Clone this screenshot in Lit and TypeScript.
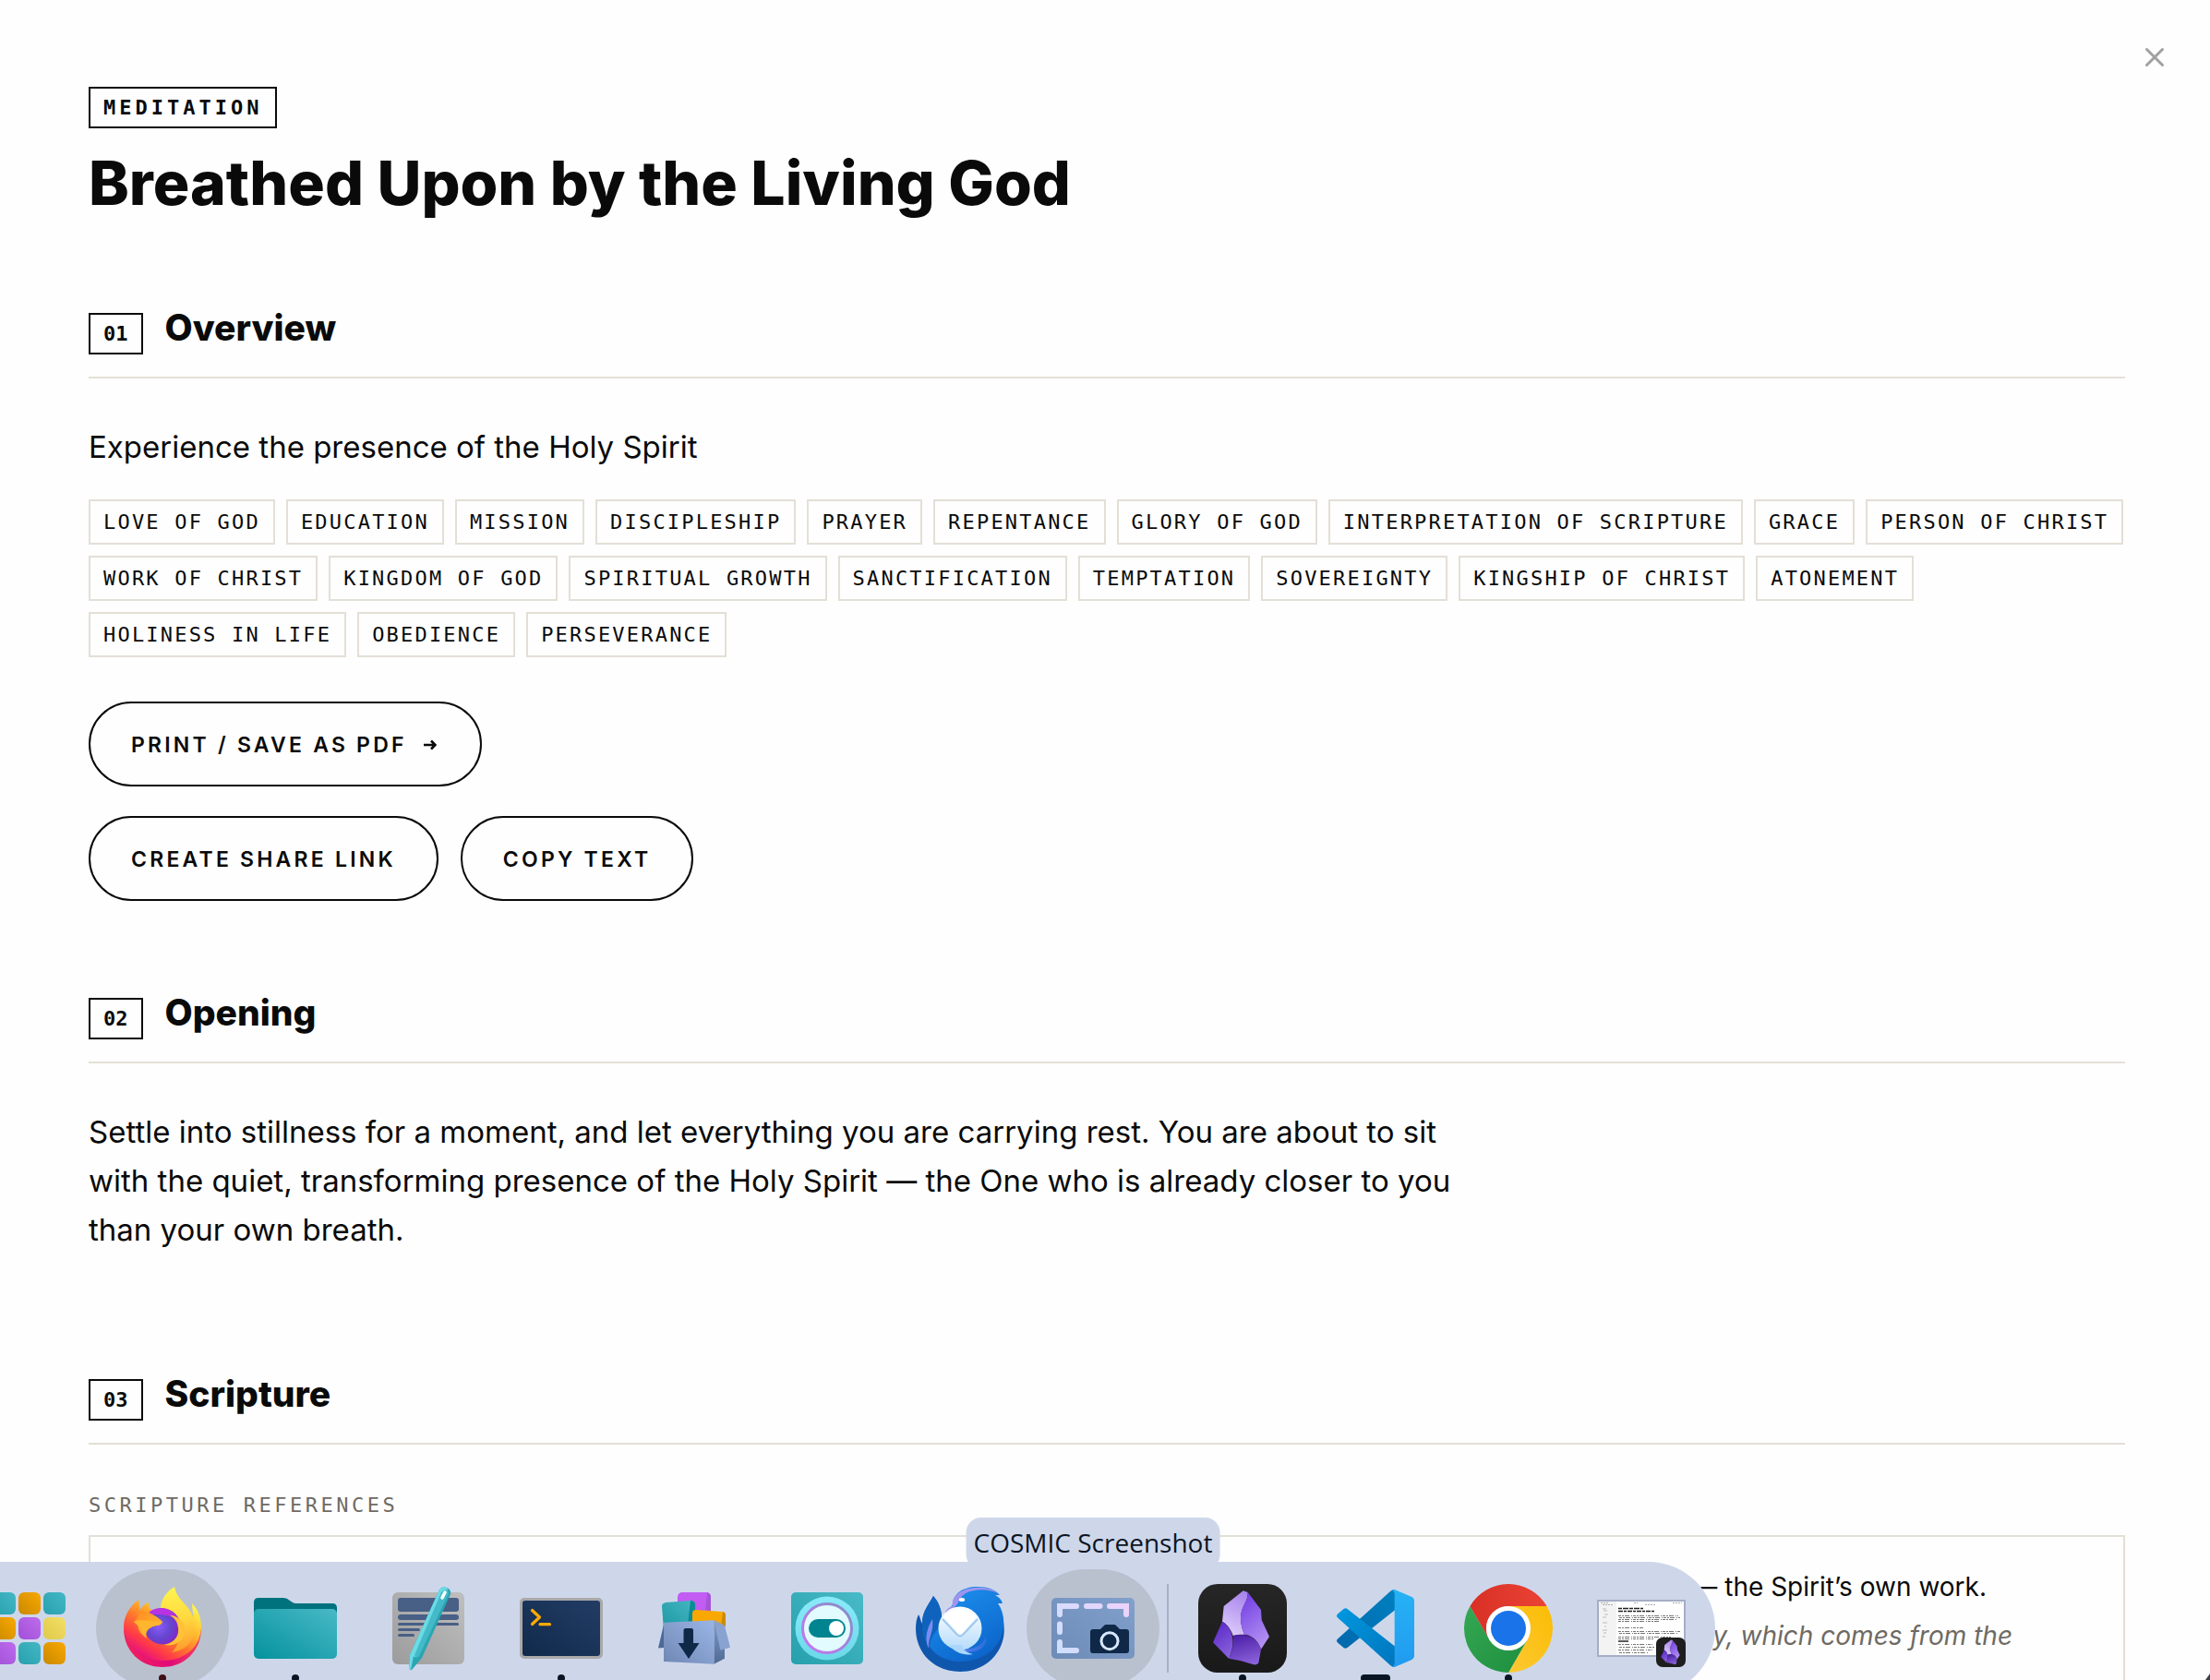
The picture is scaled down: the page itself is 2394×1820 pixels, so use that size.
import { LitElement, html, css, svg, nothing } from "lit";
import type { TemplateResult } from "lit";
import { customElement, property } from "lit/decorators.js";
import { classMap } from "lit/directives/class-map.js";

const TAGS = [
  "Love of God", "Education", "Mission", "Discipleship", "Prayer", "Repentance",
  "Glory of God", "Interpretation of Scripture", "Grace", "Person of Christ",
  "Work of Christ", "Kingdom of God", "Spiritual Growth", "Sanctification",
  "Temptation", "Sovereignty", "Kingship of Christ", "Atonement",
  "Holiness in Life", "Obedience", "Perseverance",
];

const crystal = svg`
  <path d="M48.700 7.300 53.700 9C54 20 46 24 46 37C46 44 48 50 50 54.700C46 54.500 42 54.800 37.700 56C36 50 31 43 26 40.700L27.700 24Z" fill="url(#ob-a)"/>
  <path d="M53.700 9 68 28 68.700 39 77 57 68 70.700C65 62 58 55 50 54.700C48 50 46 44 46 37C46 24 54 20 53.700 9Z" fill="url(#ob-b)"/>
  <path d="M26 40.700C36 46 42 62 33 80.700L16 63.300Z" fill="url(#ob-c)"/>
  <path d="M37.700 56C50 53 63 56 68 70.700L65.300 85.700Q63 88 60 87.300L45.300 83 33 80.700C37 74 38.500 64 37.700 56Z" fill="url(#ob-d)"/>`;

const crystalDefs = svg`<defs>
  <linearGradient id="ob-a" x1=".7" y1="0" x2=".4" y2="1"><stop stop-color="#a884ee"/><stop offset="1" stop-color="#dccbfa"/></linearGradient>
  <linearGradient id="ob-b" x1=".3" y1="0" x2=".7" y2="1"><stop stop-color="#7441e4"/><stop offset="1" stop-color="#b594f2"/></linearGradient>
  <linearGradient id="ob-c" x1=".3" y1="0" x2=".7" y2="1"><stop stop-color="#5a28c6"/><stop offset="1" stop-color="#8a63dd"/></linearGradient>
  <linearGradient id="ob-d" x1=".3" y1="0" x2=".6" y2="1"><stop stop-color="#4c1fa6"/><stop offset="1" stop-color="#8b62dc"/></linearGradient>
  <linearGradient id="ob-bg" x1="0" y1="0" x2="0" y2="1"><stop stop-color="#262626"/><stop offset="1" stop-color="#191919"/></linearGradient>
</defs>`;

const tile = (x: number, y: number, fill: string) =>
  svg`<rect x=${x} y=${y} width="24" height="24" rx="6" fill=${`url(#ap-${fill})`}/>`;

const ICONS: Record<string, TemplateResult> = {
  apps: svg`<defs>
      <linearGradient id="ap-t" x1="0" y1="1" x2="1" y2="0"><stop stop-color="#27a0ad"/><stop offset="1" stop-color="#45b7c5"/></linearGradient>
      <linearGradient id="ap-o" x1="0" y1="1" x2="1" y2="0"><stop stop-color="#c98900"/><stop offset="1" stop-color="#f9a800"/></linearGradient>
      <linearGradient id="ap-p" x1="0" y1="1" x2="1" y2="0"><stop stop-color="#a150d8"/><stop offset="1" stop-color="#bd6cec"/></linearGradient>
      <linearGradient id="ap-y" x1="0" y1="1" x2="1" y2="0"><stop stop-color="#dfc94a"/><stop offset="1" stop-color="#f3df66"/></linearGradient>
    </defs>
    ${tile(9, 9, "t")}${tile(36, 9, "o")}${tile(63, 9, "t")}
    ${tile(9, 36, "o")}${tile(36, 36, "p")}${tile(63, 36, "y")}
    ${tile(9, 63, "p")}${tile(36, 63, "t")}${tile(63, 63, "o")}`,

  firefox: svg`<defs>
      <linearGradient id="ff-a" x1=".85" y1=".1" x2=".2" y2=".9"><stop stop-color="#fff04a"/><stop offset=".3" stop-color="#ffbd2e"/><stop offset=".55" stop-color="#ff7a2c"/><stop offset=".8" stop-color="#ff3a47"/><stop offset="1" stop-color="#e6127c"/></linearGradient>
      <linearGradient id="ff-b" x1=".5" y1="0" x2=".6" y2="1"><stop stop-color="#fff44f"/><stop offset=".5" stop-color="#ffd83f"/><stop offset="1" stop-color="#ff9a2c"/></linearGradient>
      <radialGradient id="ff-c" cx=".4" cy=".5" r=".65"><stop stop-color="#8a5bf8"/><stop offset=".5" stop-color="#6447cf"/><stop offset="1" stop-color="#8b1fc4"/></radialGradient>
      <linearGradient id="ff-d" x1="0" y1="0" x2="1" y2="1"><stop stop-color="#ff8a1f"/><stop offset="1" stop-color="#ffbf36"/></linearGradient>
      <linearGradient id="ff-e" x1="0" y1="0" x2="1" y2="0"><stop stop-color="#f0225c"/><stop offset=".6" stop-color="#e20a78"/><stop offset="1" stop-color="#f5425c"/></linearGradient>
    </defs>
    <path d="M6 48C6 73 25 90 48 90C71 90 90 73 90 48L80 62C70 80 30 86 6 48Z" fill="url(#ff-e)"/>
    <path d="M22 17C23 21 23 25 24 28C26 24 29 21 33 20C33 24 34 27 37 29L50 26C62 26 72 30 82 36C81 31 80 26 80 21C87 28 90 37 90 47C89 70 71 83 48 83C27 83 9 70 6 47C6 34 13 24 22 17Z" fill="url(#ff-a)"/>
    <path d="M46 27C46 16 53 8 61 3C63 13 69 18 75 25C84 36 86 48 80 60C75 69 66 73 58 74C68 66 70 44 60 34Z" fill="url(#ff-b)"/>
    <circle cx="48" cy="46" r="19.500" fill="url(#ff-c)"/>
    <path d="M34 30C42 24 55 24 62 34C65 36 67 38 66 40C60 33 45 33 34 33Z" fill="#b833e1"/>
    <path d="M56 34C64 34 74 41 72 53C70 63 60 68 50 66C60 64 66 57 65 48C64 40 61 37 56 34Z" fill="#ffc136"/>
    <path d="M24 29C31 29 43 35 48 41C47 45 42 45 37 46C31 48 29 54 31 59C25 54 20 50 22 44C20 44 18 42 17 41C21 38 22 34 24 29Z" fill="url(#ff-d)"/>
    <path d="M17 41C24 37 36 41 48 41C46 46 40 44 36 47C31 49 29 54 30 58C25 54 25 47 17 41Z" fill="#ffb52e"/>`,

  folder: svg`<defs><linearGradient id="fo" x1="0" y1="1" x2="1" y2="0"><stop stop-color="#04929d"/><stop offset="1" stop-color="#49b9c7"/></linearGradient></defs>
    <path d="M3 45V20Q3 15 8 15H35Q39 15 42 18L45 20Q46 21 49 21H88Q93 21 93 26V45Z" fill="#00727d"/>
    <rect x="3" y="27" width="90" height="54" rx="5" fill="url(#fo)"/>`,

  editor: svg`<defs><linearGradient id="ed" x1="0" y1="1" x2="1" y2="0"><stop stop-color="#9c9c9c"/><stop offset="1" stop-color="#bfbfbf"/></linearGradient></defs>
    <rect x="9" y="9" width="78" height="78" rx="6" fill="url(#ed)"/>
    <g fill="#485f86"><rect x="15" y="15" width="66" height="15" rx="3"/><rect x="15" y="33" width="66" height="6" rx="3"/><rect x="15" y="42" width="66" height="3" rx="1.500"/><rect x="15" y="48" width="24" height="3" rx="1.500"/><rect x="15" y="54" width="18" height="3" rx="1.500"/></g>
    <path d="M60 6Q63 2 68 4Q73 6 72 11L41 80 30 93Q28 94 27 91L28 77Z" fill="#2aa5b3"/>
    <path d="M60 6Q63 2 68 4L69 6 36 79Q33 80 32 78L29 93Q27 93 27 91L28 77Z" fill="#6bdbe6"/>
    <path d="M62 9Q65 5 69 7L70 10 38 78Q35 81 33 77Z" fill="#44bac8"/>
    <path d="M66 9 63 15" stroke="#fff" stroke-width="3.500" stroke-linecap="round"/>`,

  terminal: svg`<defs><linearGradient id="te" x1="0" y1="1" x2="1" y2="0"><stop stop-color="#102a4b"/><stop offset="1" stop-color="#233c65"/></linearGradient></defs>
    <rect x="3" y="15" width="90" height="66" rx="5" fill="#a9a9a9"/><rect x="6" y="18" width="84" height="60" rx="3" fill="url(#te)"/>
    <path d="M16.500 28.500 24.500 36 16.500 43.500M25 43.700H35.500" fill="none" stroke="#ffab00" stroke-width="3.200" stroke-linecap="round" stroke-linejoin="round"/>`,

  shop: svg`<defs>
      <linearGradient id="sh" x1="0" y1="1" x2="1" y2="0"><stop stop-color="#7087b4"/><stop offset="1" stop-color="#9ab6e6"/></linearGradient>
      <linearGradient id="sh-s" x1="0" y1="0" x2="0" y2="1"><stop stop-color="#7f9bcb"/><stop offset="1" stop-color="#4f6b94"/></linearGradient>
      <linearGradient id="sh-t" x1="0" y1="1" x2="1" y2="0"><stop stop-color="#1b98a3"/><stop offset="1" stop-color="#45b7c2"/></linearGradient>
    </defs>
    <rect x="30" y="9" width="36" height="40" rx="5" fill="#c25cf3"/><path d="M62 9Q66 10 66 14V40H59Z" fill="#a654d8"/>
    <path d="M13 24Q13 21 17 20L44 18Q49 18 49 23V50H15Z" fill="url(#sh-t)"/><path d="M44 18Q49 18 49 23V44H41Z" fill="#0a8b97"/>
    <path d="M46 32Q46 28 50 28L78 30Q82 30 82 34L81 50H46Z" fill="#f9a800"/><path d="M79 30Q82 31 82 34V46H77Z" fill="#cb8b00"/>
    <path d="M15 44 9 69.500 15 69Z" fill="#4c6a96"/>
    <path d="M69.400 39.300 81 45V80.700L69.400 86.700Z" fill="url(#sh-s)"/>
    <path d="M15 41.700 69.400 39.300V86.700L15 84Z" fill="url(#sh)"/>
    <path d="M69.400 39.300 81 45 87 68.700 76.400 71.700Z" fill="#89a3d1"/>
    <path d="M36.500 50Q36.500 48 38.500 48H45Q47 48 47 50V64H53.500L42 81 30.600 64H36.500Z" fill="#0f2848"/>`,

  toggle: svg`<defs>
      <linearGradient id="to" x1="0" y1="1" x2="1" y2="0"><stop stop-color="#25a0ac"/><stop offset="1" stop-color="#4abac7"/></linearGradient>
      <linearGradient id="to-r" x1="0" y1="1" x2="1" y2="0"><stop stop-color="#c973f6"/><stop offset="1" stop-color="#8291c2"/></linearGradient>
      <linearGradient id="to-o" x1="0" y1="0" x2="0" y2="1"><stop stop-color="#8aeafa"/><stop offset="1" stop-color="#6bd9e8"/></linearGradient>
    </defs>
    <rect x="9" y="9" width="78" height="78" rx="5" fill="url(#to)"/><circle cx="48" cy="48" r="34.500" fill="url(#to-o)"/>
    <circle cx="48" cy="48" r="26.500" fill="#e2fbff" stroke="url(#to-r)" stroke-width="3"/>
    <rect x="28" y="38" width="40" height="20" rx="10" fill="#00848f"/><circle cx="58" cy="48" r="8" fill="#fff"/>`,

  thunderbird: svg`<defs>
      <linearGradient id="tb" x1=".2" y1="0" x2=".8" y2="1"><stop stop-color="#1e93f0"/><stop offset="1" stop-color="#0b62c9"/></linearGradient>
      <linearGradient id="tb-w" x1="0" y1="0" x2="0" y2="1"><stop stop-color="#fff"/><stop offset="1" stop-color="#b5dcfb"/></linearGradient>
      <linearGradient id="tb-v" x1="0" y1="0" x2="1" y2="0"><stop stop-color="#5f7ff0"/><stop offset="1" stop-color="#2b70dc"/></linearGradient>
    </defs>
    <path d="M3 33C5 36 5 40 7 43C7 30 13 24 19 13C27 22 30 34 27 48L32 74 92 30C96 40 97 52 94 62C88 82 70 95 48 95C21 95 0 76 0 48C0 42 1 37 3 33Z" fill="#0f56ad"/>
    <path d="M40 22C40 10 53 2 68 3C78 3 86 6 91 12L86 12C90 14 93 17 94 21L89 21C94 28 96 37 95 46C93 70 72 84 48 84C24 84 9 68 7 46C11 54 14 56 14 60C18 46 22 40 33 32Z" fill="url(#tb)"/>
    <path d="M40 24C38 13 50 4 66 4C76 3 85 6 91 11C80 5 64 5 54 10C46 15 48 20 42 25C38 28 33 30 32 36C30 30 35 25 40 24Z" fill="#9d94ee"/>
    <path d="M7 42C7 30 13 24 19 13C27 22 30 34 27 46C20 52 16 58 15 68C9 60 7 50 7 42Z" fill="#0f63bd"/>
    <path d="M18 38C12 48 9 60 14 70C13 58 20 52 18 38Z" fill="#7b8cf0"/>
    <path d="M46 68C58 74 72 68 76 57C79 66 68 76 54 73Z" fill="url(#tb-v)"/>
    <circle cx="48" cy="48" r="23.500" fill="url(#tb-w)"/>
    <path d="M36 66C42 74 52 78 62 76C54 74 50 70 50 66Z" fill="#a9d6fa"/>
    <path d="M29 38 44 54Q48 59 52 54L67 38" fill="none" stroke="#9fc8ee" stroke-width="2"/>
    <path d="M30 36C36 26 60 26 66 36L51 53Q48 56 45 53Z" fill="#fff"/>
    <ellipse cx="50" cy="17" rx="3.200" ry="2" fill="#fff"/>`,

  capture: svg`<defs>
      <linearGradient id="ca" x1="0" y1="1" x2="1" y2="0"><stop stop-color="#6d8bb7"/><stop offset="1" stop-color="#82a0cc"/></linearGradient>
      <linearGradient id="ca-l" gradientUnits="userSpaceOnUse" x1="9" y1="72" x2="87" y2="24"><stop stop-color="#cfdffe"/><stop offset="1" stop-color="#ecd2fb"/></linearGradient>
    </defs>
    <rect x="3" y="15" width="90" height="66" rx="5" fill="url(#ca)"/>
    <path d="M12 33V24H30M41 24H55.500M66 24H84V33M12 43.500V52M12 63V72H30" fill="none" stroke="url(#ca-l)" stroke-width="6" stroke-linecap="round"/>
    <path d="M48 49H56L60 45Q61 44 62 44H71Q72 44 73 45L77 49H84Q87 49 87 52V72Q87 75 84 75H48Q45 75 45 72V52Q45 49 48 49Z" fill="#0f2848"/>
    <circle cx="66" cy="61.700" r="9" fill="none" stroke="#d8e8ff" stroke-width="3"/>`,

  obsidian: svg`${crystalDefs}<rect width="96" height="96" rx="21" fill="url(#ob-bg)"/>${crystal}`,

  code: svg`<defs>
      <linearGradient id="vs-a" x1="1" y1="0" x2="0" y2="1"><stop stop-color="#0080c0"/><stop offset="1" stop-color="#0068ac"/></linearGradient>
      <linearGradient id="vs-b" x1="0" y1="0" x2="1" y2="1"><stop stop-color="#0098df"/><stop offset="1" stop-color="#0075bd"/></linearGradient>
      <linearGradient id="vs-c" x1="0" y1="0" x2="0" y2="1"><stop stop-color="#27b2f5"/><stop offset="1" stop-color="#219bef"/></linearGradient>
    </defs>
    <path d="M69 6V28.300L17.500 69Q15.500 70.500 13.500 69L7 63.500Q5 61.500 7 59.500L64 8Q66 6 69 6Z" fill="url(#vs-a)"/>
    <path d="M69 90V67.500L17.500 27Q15.500 25.500 13.500 27L7 32.500Q5 34.500 7 36.500L64 88Q66 90 69 90Z" fill="url(#vs-b)"/>
    <path d="M65.500 89.500Q68.700 88.500 68.700 85V11Q68.700 7.500 65.500 6.500Q68 5.500 71 7L87.500 14Q90 15.500 90 18V78Q90 80.500 87.500 82L71 89Q68 90.500 65.500 89.500Z" fill="url(#vs-c)"/>`,

  chrome: svg`<defs>
      <linearGradient id="ch-r" x1="0" y1="0" x2="1" y2="0"><stop stop-color="#d93025"/><stop offset="1" stop-color="#ea4335"/></linearGradient>
      <linearGradient id="ch-g" x1="1" y1="1" x2="0" y2="0"><stop stop-color="#1e8e3e"/><stop offset="1" stop-color="#34a853"/></linearGradient>
      <linearGradient id="ch-y" x1="0" y1="1" x2="1" y2="0"><stop stop-color="#fcc934"/><stop offset="1" stop-color="#fbbc04"/></linearGradient>
    </defs>
    <path d="M48 24H89.570A48 48 0 0 1 48 96L68.780 60Z" fill="url(#ch-y)"/>
    <path d="M6.430 24 27.220 60A24 24 0 0 0 68.780 60L48 96A48 48 0 0 1 6.430 24Z" fill="url(#ch-g)"/>
    <path d="M6.430 24A48 48 0 0 1 89.570 24H48A24 24 0 0 0 27.220 60Z" fill="url(#ch-r)"/>
    <circle cx="48" cy="48" r="24" fill="#fff"/><circle cx="48" cy="48" r="19" fill="#1a73e8"/>`,

  note: svg`${crystalDefs}
    <rect x="1" y="18" width="94" height="60" fill="#fff" stroke="#a5aec6" stroke-width="2"/>
    <rect x="2" y="19" width="19" height="58" fill="#f3f3f3"/>
    <g fill="none" stroke="#777" stroke-width="1">
      <path d="M23 26.500H50" stroke-width="1.500" stroke-dasharray="4 1 6 1" stroke="#222"/>
      <path d="M23 29.500H62" stroke-width="1.500" stroke-dasharray="5 1 3 1" stroke="#222"/>
      <path d="M4 20.500H12M40 20.500H44M82 20.500H92M6 22.500H18M52 22.500H64" stroke="#aaa" stroke-dasharray="2 1"/>
      <path d="M23 34.500H88M24 36.500H90M23 38.500H86M23 40.500H68M23 47.500H50M23 51.500H90M24 53.500H88M23 57.500H80M23 59.500H62M23 65.500H60M24 68.500H62M23 71.500H60M24 74.500H56" stroke-dasharray="3 1 2 1 5 2 1 1"/>
      <path d="M23 62H34" stroke="#222" stroke-width="1.500"/>
      <path d="M6 27H10M7 29H11M8 33H12M6 36H10M6 42H11M8 46H10M6 50H11M7 53H10M6 57H9" stroke="#bbb"/>
    </g>
    <svg x="64" y="58" width="32" height="32" viewBox="0 0 96 96"><rect width="96" height="96" rx="21" fill="#1e1e1e"/>${crystal}</svg>`,
};

@customElement("dock-item")
class DockItem extends LitElement {
  @property() icon = "";
  @property() label = "";
  @property() mark = "";
  @property() tip = "";
  @property({ type: Boolean }) lit = false;

  static styles = css`
    :host { display: block; flex: none; }
    .cell {
      position: relative; display: flex; flex-direction: column; align-items: center; gap: 2px;
      width: 144px; height: 128px; padding: 16px 0 0; border: 0; border-radius: 64px; background: none;
    }
    .lit { background: #b9c1cf; }
    .icon { display: block; flex: none; width: 96px; height: 96px; }
    .mark { flex: none; width: 8px; height: 8px; border-radius: 4px; background: #0a1523; }
    .red { background: #400e16; }
    .wide { width: 32px; }
    .tip {
      position: absolute; bottom: 100%; left: 50%; transform: translateX(-50%);
      padding: 7px 8px 9px; border-radius: 16px; background: #ced7ea; color: #0b1524;
      font: 28px/40px "Open Sans", sans-serif; white-space: nowrap;
    }
  `;

  render() {
    return html`<button class=${classMap({ cell: true, lit: this.lit })} aria-label=${this.label}>
      ${this.tip ? html`<span class="tip">${this.tip}</span>` : nothing}
      <svg class="icon" viewBox="0 0 96 96" aria-hidden="true">${ICONS[this.icon]}</svg>
      ${this.mark
        ? html`<span class=${classMap({ mark: true, wide: this.mark === "wide", red: this.mark === "red" })}></span>`
        : nothing}
    </button>`;
  }
}

@customElement("app-root")
export class AppRoot extends LitElement {
  static styles = css`
    :host {
      display: block; position: relative; height: 100vh; overflow: hidden;
      background: #fefefe; color: #0a0a0a; font-family: Inter, sans-serif;
    }
    * { box-sizing: border-box; }
    h1, h2, h3, p, ul { margin: 0; padding: 0; }
    .page { padding: 94px 92px 0 96px; }
    .close {
      position: absolute; top: 38px; right: 36px; display: grid; place-items: center;
      width: 48px; height: 48px; padding: 0; border: 0; background: none;
    }
    .badge, .number, .tag, .label {
      font-family: "DejaVu Sans Mono", "Liberation Mono", monospace; font-size: 22px; line-height: 25px;
    }
    .badge, .number { padding: 8px 14px; border: 2px solid #0a0a0a; font-weight: 700; }
    .badge { display: inline-block; letter-spacing: 4px; vertical-align: top; }
    h1 { margin-top: 23px; font-size: 66px; line-height: 72px; font-weight: 800; }
    section { display: flex; flex-direction: column; margin-top: 97px; }
    .head {
      display: flex; align-items: baseline; gap: 24px;
      padding-bottom: 24px; border-bottom: 2px solid #e4dfd6;
    }
    h2 { font-size: 39px; line-height: 48px; font-weight: 800; }
    .prose {
      max-width: 1500px; padding: 48px 0 30px;
      font-size: 33px; line-height: 53px;
    }
    .tags { display: flex; flex-wrap: wrap; gap: 12px; list-style: none; }
    .tag {
      padding: 10px 14px; border: 2px solid #e4dfd6;
      letter-spacing: 0.1em; text-transform: uppercase;
    }
    .actions { display: flex; flex-direction: column; gap: 32px; margin-top: 48px; }
    .row { display: flex; gap: 24px; }
    .pill {
      display: flex; align-items: center; gap: 18px; padding: 31px 44px 29px;
      border: 2px solid #0a0a0a; border-radius: 46px; background: none; color: inherit;
      font: 600 23px/28px Inter, sans-serif; letter-spacing: 0.14em; text-transform: uppercase;
    }
    .pill svg { margin-right: 3px; }
    .label {
      margin: 53px 0 20px; color: #6f6a62; font-weight: 400;
      letter-spacing: 0.16em; text-transform: uppercase;
    }
    .card {
      min-height: 240px; padding: 28px 120px 28px 28px; border: 2px solid #e4dfd6;
      font-size: 28px; line-height: 53px; text-align: right;
    }
    .claim { padding-right: 28px; }
    .quote { color: #6f6a62; font-style: italic; }
    .dock {
      position: absolute; bottom: -16px; left: -48px; display: flex; padding: 8px;
      border-radius: 0 72px 72px 0; background: #ced7ea;
    }
    .divider { width: 2px; height: 96px; margin: 16px 8px; background: #a6b0c6; }
    .corner { position: absolute; right: 0; bottom: 0; }
  `;

  private head(number: string, title: string) {
    return html`<header class="head"><span class="number">${number}</span><h2>${title}</h2></header>`;
  }

  render() {
    return html`
      <main class="page">
        <span class="badge">MEDITATION</span>
        <h1>Breathed Upon by the Living God</h1>

        <section>
          ${this.head("01", "Overview")}
          <p class="prose">Experience the presence of the Holy Spirit</p>
          <ul class="tags">${TAGS.map((t) => html`<li class="tag">${t}</li>`)}</ul>
          <div class="actions">
            <div class="row">
              <button class="pill">Print / Save as PDF
                <svg width="14" height="12" viewBox="0 0 14 12" aria-hidden="true"><path d="M0 6H12M8 1.500 12.500 6 8 10.500" fill="none" stroke="#0a0a0a" stroke-width="2.600"/></svg>
              </button>
            </div>
            <div class="row">
              <button class="pill">Create share link</button>
              <button class="pill">Copy text</button>
            </div>
          </div>
        </section>

        <section>
          ${this.head("02", "Opening")}
          <p class="prose">Settle into stillness for a moment, and let everything you are carrying rest. You are about to sit with the quiet, transforming presence of the Holy Spirit — the One who is already closer to you than your own breath.</p>
        </section>

        <section>
          ${this.head("03", "Scripture")}
          <h3 class="label">Scripture references</h3>
          <div class="card">
            <p class="claim">— the Spirit’s own work.</p>
            <p class="quote">y, which comes from the</p>
          </div>
        </section>
      </main>

      <button class="close" aria-label="Close">
        <svg width="22" height="22" viewBox="0 0 22 22" aria-hidden="true"><path d="M2.500 2.500 19.500 19.500M19.500 2.500 2.500 19.500" stroke="#a0a0a0" stroke-width="3" stroke-linecap="round"/></svg>
      </button>

      <svg class="corner" width="5" height="7" viewBox="0 0 5 7" aria-hidden="true"><path d="M5 0V7H0Z" fill="#3a4048"/></svg>

      <nav class="dock" aria-label="Dock">
        <dock-item icon="apps" label="Applications"></dock-item>
        <dock-item icon="firefox" label="Firefox" mark="red" lit></dock-item>
        <dock-item icon="folder" label="Files" mark="dot"></dock-item>
        <dock-item icon="editor" label="Text Editor"></dock-item>
        <dock-item icon="terminal" label="Terminal" mark="dot"></dock-item>
        <dock-item icon="shop" label="Store"></dock-item>
        <dock-item icon="toggle" label="Settings"></dock-item>
        <dock-item icon="thunderbird" label="Thunderbird"></dock-item>
        <dock-item icon="capture" label="COSMIC Screenshot" tip="COSMIC Screenshot" lit></dock-item>
        <span class="divider"></span>
        <dock-item icon="obsidian" label="Obsidian" mark="dot"></dock-item>
        <dock-item icon="code" label="Visual Studio Code" mark="wide"></dock-item>
        <dock-item icon="chrome" label="Chrome" mark="dot"></dock-item>
        <dock-item icon="note" label="Minimized note"></dock-item>
      </nav>
    `;
  }
}
